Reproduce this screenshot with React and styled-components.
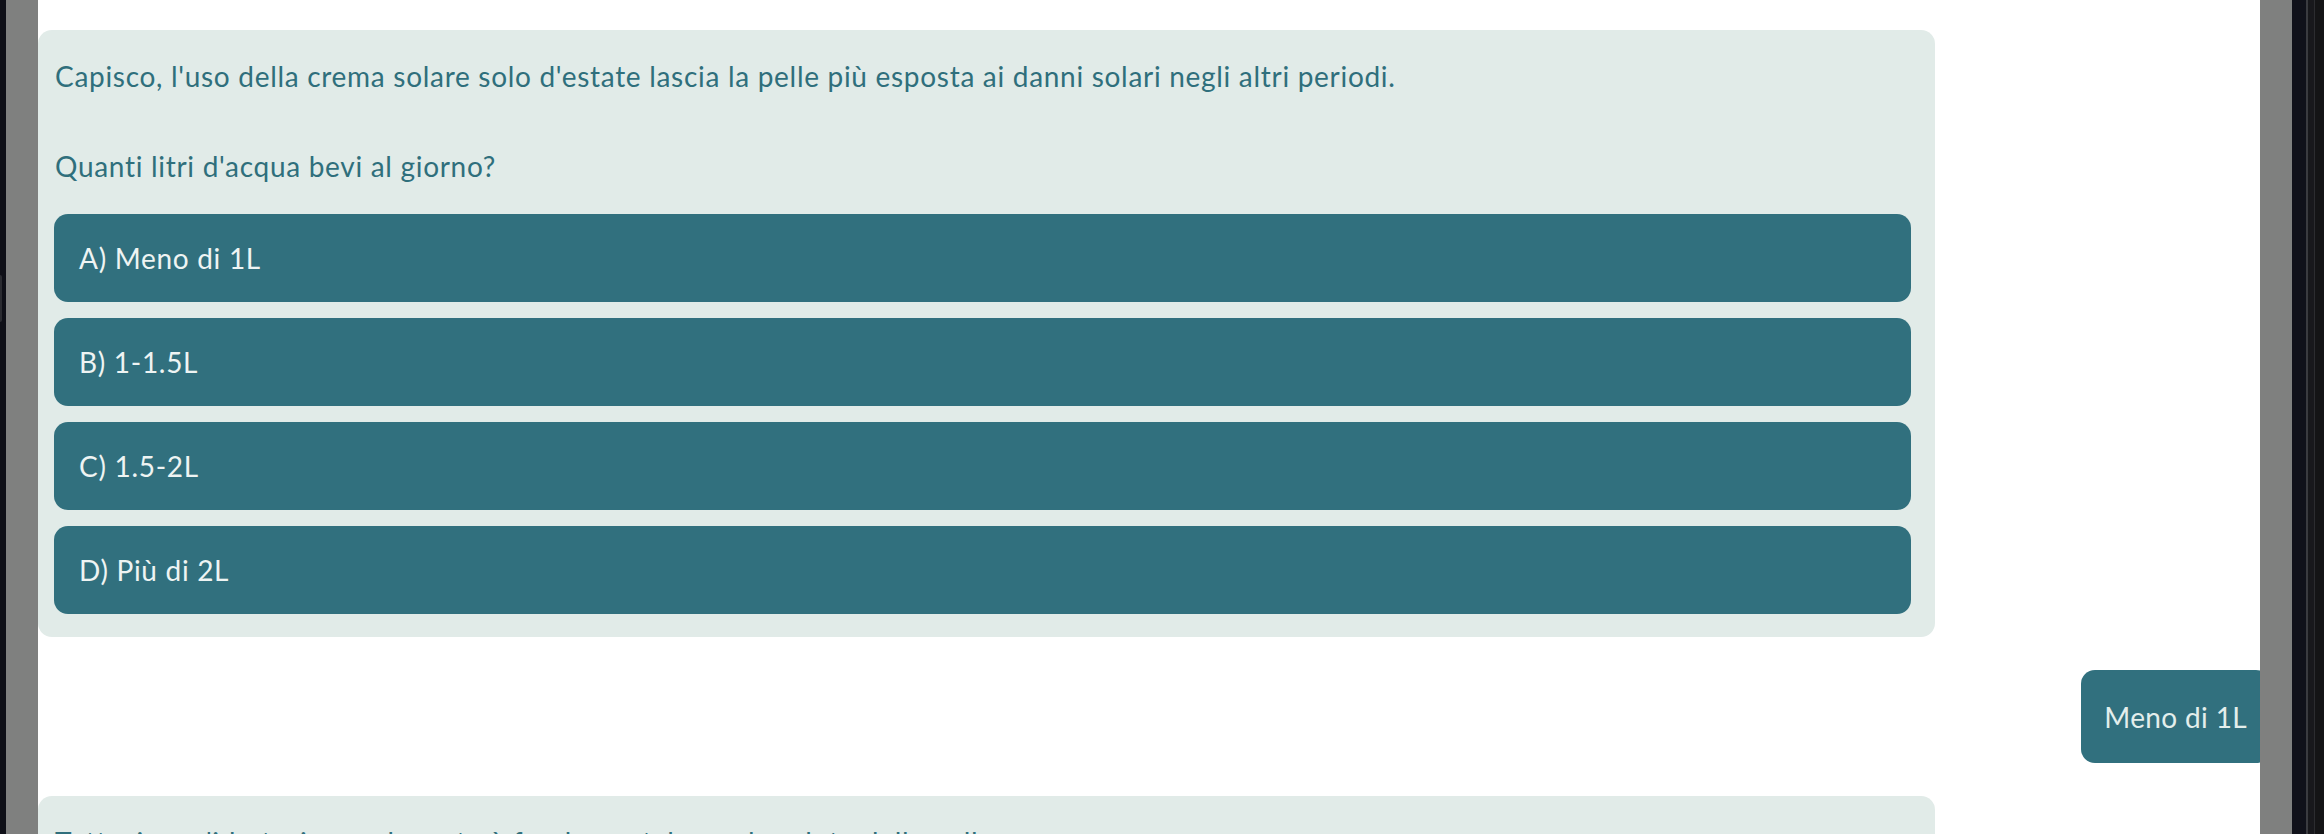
import React from 'react';
import styled, { createGlobalStyle } from 'styled-components';

const GlobalStyle = createGlobalStyle`
  html, body {
    margin: 0;
    padding: 0;
    background: #ffffff;
  }
  body {
    font-family: Lato, 'Noto Sans', sans-serif;
  }
`;

// Frame around the chat
const Screen = styled.div`
  display: flex;
  width: 2324px;
  height: 834px;
  overflow: hidden;
`;

const DarkEdge = styled.div`
  width: ${(p) => p.$w}px;
  flex-shrink: 0;
  background: #0e0f17;
  display: flex;
  flex-direction: column;
`;

const EdgeTab = styled.div`
  margin-top: 275px;
  width: 2px;
  height: 47px;
  background: #2a2b31;
  border-radius: 0 2px 2px 0;
`;

const RightEdge = styled.div`
  width: 32px;
  flex-shrink: 0;
  display: flex;
  background: #10111a;
`;

const EdgeLine = styled.div`
  width: ${(p) => p.$w}px;
  background: ${(p) => p.$c};
`;

const Gutter = styled.div`
  width: 32px;
  flex-shrink: 0;
  background: #7f807f;
`;

const Main = styled.div`
  flex: 1;
  background: #ffffff;
  overflow: hidden;
  padding-top: 30px;
`;

const Thread = styled.div`
  width: calc(100% + 10px);
  display: flex;
  flex-direction: column;
  gap: 33px;
`;

const BotCard = styled.div`
  width: 85%;
  box-sizing: border-box;
  background: #e1ebe8;
  border-radius: 14px;
  padding: 26px 24px 23px 16px;
  color: #2f6f7c;
`;

const Para = styled.p`
  margin: 0 0 ${(p) => p.$gap || 0}px 1px;
  font-size: 28px;
  line-height: 40px;
  letter-spacing: 0.7px;
`;

const Options = styled.div`
  display: flex;
  flex-direction: column;
  gap: 16px;
`;

const Option = styled.button`
  display: flex;
  align-items: center;
  height: 88px;
  padding: 0 25px;
  border: none;
  border-radius: 14px;
  background: #31707e;
  color: #eef4f3;
  font-family: inherit;
  font-size: 28px;
  letter-spacing: 0.7px;
  text-align: left;
  cursor: pointer;
`;

const UserBubble = styled.div`
  align-self: flex-end;
  display: flex;
  align-items: center;
  height: 93px;
  padding: 0 23px;
  border-radius: 14px;
  background: #31707e;
  color: #e3eeec;
  font-size: 28px;
  letter-spacing: 0.35px;
`;

const options = ['A) Meno di 1L', 'B) 1-1.5L', 'C) 1.5-2L', 'D) Più di 2L'];

export default function App() {
  return (
    <>
      <GlobalStyle />
      <Screen>
        <DarkEdge $w={6}>
          <EdgeTab />
        </DarkEdge>
        <Gutter />
        <Main>
          <Thread>
            <BotCard>
              <Para $gap={50}>
                Capisco, l'uso della crema solare solo d'estate lascia la pelle più esposta ai danni solari negli altri periodi.
              </Para>
              <Para $gap={28}>Quanti litri d'acqua bevi al giorno?</Para>
              <Options>
                {options.map((o) => (
                  <Option key={o}>{o}</Option>
                ))}
              </Options>
            </BotCard>
            <UserBubble>Meno di 1L</UserBubble>
            <BotCard>
              <Para>
                Tuttavia, un'idratazione adeguata è fondamentale per la salute della pelle.
              </Para>
            </BotCard>
          </Thread>
        </Main>
        <Gutter />
        <RightEdge>
          <EdgeLine $w={14} $c="#10111a" />
          <EdgeLine $w={2} $c="#3a3b40" />
          <EdgeLine $w={6} $c="#18181c" />
          <EdgeLine $w={1} $c="#2c2c30" />
          <EdgeLine $w={9} $c="#141416" />
        </RightEdge>
      </Screen>
    </>
  );
}
